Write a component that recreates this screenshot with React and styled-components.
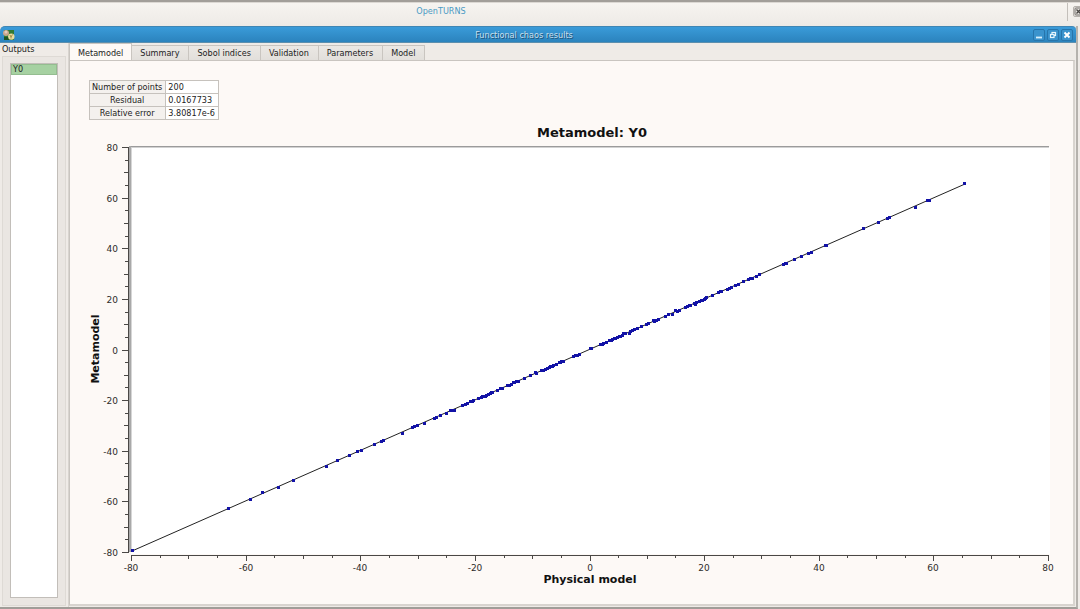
import React, { useState } from "react";
import styled, { createGlobalStyle } from "styled-components";

const GlobalStyle = createGlobalStyle`
    * {
        box-sizing: border-box;
    }

    body {
        margin: 0;
        background: #efebe7;
        color: #222;
        font-family: "DejaVu Sans Condensed", "DejaVu Sans", sans-serif;
        font-size: 9px;
        line-height: 12px;
    }

    button {
        margin: 0;
        padding: 0;
        border: none;
        color: inherit;
        font: inherit;
    }
`;

const Desktop = styled.div`
    display: flex;
    flex-direction: column;
    min-height: 100vh;
    border-top: 2px solid #a29e99;
`;

const DockBar = styled.header`
    display: flex;
    height: 24px;
    border-top: 1px solid #dcd8d3;
    background: linear-gradient(#f7f4f0, #edeae6);
`;

const DockTitle = styled.h1`
    flex: 1;
    margin: 0 0 5px;
    padding-top: 2px;
    padding-right: 185px;
    border-right: 1px solid #c3bfba;
    color: #4a9ac4;
    font-size: 9px;
    font-weight: normal;
    text-align: center;
`;

const DockClip = styled.div`
    overflow: hidden;
    width: 12px;
    padding: 3px 0 0 5px;
`;

const DockButton = styled.button`
    width: 11px;
    height: 11px;
    border: 1px solid #b5b1ac;
    border-radius: 2px;
    background: #e4e1dd;

    svg {
        display: block;
    }
`;

const Window = styled.section`
    flex: 1;
    display: flex;
    flex-direction: column;
    margin-right: 2px;
    border-right: 2px solid #b5b2ad;
    border-bottom: 2px solid #a09d98;
`;

const TitleBar = styled.div`
    display: flex;
    align-items: center;
    height: 17px;
    padding: 0 3px;
    border-top: 1px solid #3f86b4;
    border-bottom: 1px solid #5c8fae;
    border-radius: 5px 4px 0 0;
    background: linear-gradient(#3a9bd9, #2b83bd);
`;

const WindowTitle = styled.h2`
    flex: 1;
    margin: 0;
    color: #c9dfec;
    font-size: 9px;
    font-weight: normal;
    text-align: center;
    text-shadow: 1px 1px 0 #1d5479;
`;

const WindowButtons = styled.div`
    display: flex;
    gap: 2px;
`;

const WindowButton = styled.button`
    width: 12px;
    height: 12px;
    border: 1px solid #2775ab;
    border-radius: 2px;
    background: #3a93cd;

    svg {
        display: block;
    }
`;

const Body = styled.div`
    flex: 1;
    display: flex;
`;

const Sidebar = styled.aside`
    display: flex;
    flex-direction: column;
    width: 69px;
    padding: 0 2px 1px;
    border-right: 1px solid #d8d4cf;
`;

const SidebarTitle = styled.h3`
    margin: 0 0 1px;
    font-size: 9px;
    font-weight: normal;
`;

const GroupBox = styled.div`
    flex: 1;
    display: flex;
    padding: 6px 7px 7px;
    border: 1px solid #dedad5;
    background: #eae6e2;
`;

const OutputList = styled.div`
    flex: 1;
    border: 1px solid #c2beb9;
    background: #fff;
`;

const OutputItem = styled.button`
    display: block;
    width: 100%;
    height: 11px;
    padding-left: 1px;
    border: 1px solid #94bd90;
    background: #a6d1a2;
    line-height: 9px;
    text-align: left;
`;

const Main = styled.main`
    flex: 1;
    display: flex;
    flex-direction: column;
    min-width: 0;
    padding: 0 1px 1px 0;
`;

const TabList = styled.div`
    display: flex;
    align-items: flex-end;
    height: 17px;
`;

const Tab = styled.button`
    height: ${(props) => (props.$active ? 18 : 15)}px;
    margin-bottom: ${(props) => (props.$active ? -1 : 0)}px;
    padding: 0 ${(props) => (props.$first ? 8 : 9)}px 0 8px;
    border: 1px solid #c9c5c0;
    border-left-width: ${(props) => (props.$first ? 1 : 0)}px;
    border-bottom: none;
    background: ${(props) => (props.$active ? "#fdf9f6" : "linear-gradient(#ebe8e4, #e2dfdb)")};
    white-space: nowrap;
`;

const TabPanel = styled.div`
    flex: 1;
    padding: 19px 17px 14px 19px;
    border: 1px solid #c9c5c0;
    border-right: 2px solid #d8d4cf;
    border-bottom: 2px solid #d8d4cf;
    background: #fdf9f6;
`;

const ResultTable = styled.table`
    margin-bottom: 1px;
    border: 1px solid #b3afaa;
    border-collapse: collapse;
    background: #fff;
`;

const ResultName = styled.th`
    height: 13px;
    padding: 0 3px 0 2px;
    border: 1px solid #c6c2bd;
    background: #f4f1ee;
    font-weight: normal;
    text-align: center;
`;

const ResultValue = styled.td`
    height: 13px;
    padding: 0 3px 0 2px;
    border: 1px solid #c6c2bd;
`;

const Chart = styled.svg`
    display: block;
    width: 100%;
    font-family: "DejaVu Sans", sans-serif;
`;

const TickLabel = styled.text`
    fill: #2e2c2a;
    font-size: 9px;
`;

const AxisTitle = styled.text`
    fill: #111;
    font-size: 11px;
    font-weight: bold;
    text-anchor: middle;
`;

const ChartTitle = styled(AxisTitle)`
    font-size: 13px;
`;

const tabs = ["Metamodel", "Summary", "Sobol indices", "Validation", "Parameters", "Model"];

const results = [
    ["Number of points", "200"],
    ["Residual", "0.0167733"],
    ["Relative error", "3.80817e-6"],
];

const LEFT = 42;
const TOP = 27;
const PLOT_WIDTH = 917;
const PLOT_HEIGHT = 405;

// distance of each sample from the left edge of the canvas
const samples = [
    1, 97, 119, 131, 147, 162, 195, 206, 218, 226, 230, 243, 250, 252, 271, 281, 283, 286, 293,
    303, 305, 309, 315, 319, 321, 323, 331, 334, 336, 339, 341, 342, 347, 350, 351, 352, 354, 355,
    357, 359, 360, 361, 366, 369, 371, 376, 378, 380, 382, 383, 385, 387, 393, 399, 404, 405, 410,
    412, 414, 416, 418, 419, 421, 422, 425, 428, 429, 430, 432, 442, 444, 446, 448, 459, 460, 469,
    471, 472, 475, 478, 480, 481, 483, 484, 486, 488, 489, 491, 492, 494, 498, 499, 501, 503, 506,
    510, 515, 517, 522, 523, 525, 527, 534, 537, 541, 544, 546, 548, 554, 556, 558, 559, 563, 564,
    565, 568, 570, 571, 573, 574, 575, 581, 587, 589, 590, 596, 598, 600, 604, 607, 612, 617, 619,
    621, 625, 628, 652, 654, 655, 663, 670, 677, 680, 694, 695, 732, 747, 756, 758, 784, 796, 798,
    833,
];

// samples that sit visibly above or below the diagonal
const residuals = {
    1: -1, 131: -1, 147: 1, 195: 1, 271: 1, 293: 1, 315: 1, 323: 1, 339: -1, 354: 1, 382: -1,
    404: -1, 430: -1, 459: -1, 492: -1, 498: 1, 522: -1, 541: 1, 544: -1, 564: 1, 575: -1,
    589: -1, 732: -1, 784: 1, 833: -1,
};

const fitY = (x) => 430 - (x - 1) * 0.4403;

const ticks = Array.from({ length: 33 }, (_, i) => -80 + i * 5);

const tickSize = (value) => {
    if (value % 20 === 0) return 6;
    return value % 10 === 0 ? 4 : 3;
};

function MetamodelChart() {
    const xPos = (v) => Math.round(LEFT + ((v + 80) / 160) * PLOT_WIDTH);
    const yPos = (v) => Math.round(TOP + ((80 - v) / 160) * PLOT_HEIGHT);

    return (
        <Chart viewBox="0 0 967 469" role="img" aria-label="Metamodel: Y0">
            <ChartTitle x="503" y="16">Metamodel: Y0</ChartTitle>
            <rect x="42" y="26" width="919" height="407" fill="#fff" />
            <rect x="40" y="25" width="920" height="1" fill="#9b9b9b" />
            <rect x="42" y="26" width="918" height="1" fill="#d2d2d2" />
            <rect x="40" y="25" width="2" height="406" fill="#a9a9a9" />
            <rect x="42" y="27" width="1" height="404" fill="#d6d6d6" />

            <g fill="#4a4846">
                <rect x="39" y="26" width="1" height="406" />
                <rect x="42" y="434" width="918" height="1" />
                {ticks.map((v) => (
                    <rect key={v} x={39 - tickSize(v)} y={yPos(v) - 1} width={tickSize(v)} height="1" />
                ))}
                {ticks.map((v) => (
                    <rect key={v} x={xPos(v)} y="434" width="1" height={tickSize(v)} />
                ))}
            </g>
            {ticks.filter((v) => v % 20 === 0).map((v) => (
                <g key={v}>
                    <TickLabel x="29" y={yPos(v) + 3} textAnchor="end">{v}</TickLabel>
                    <TickLabel x={xPos(v)} y="450" textAnchor="middle">{v}</TickLabel>
                </g>
            ))}

            <line x1="43" y1="430" x2="876" y2="63" stroke="#222" strokeWidth="1" />
            <g fill="#1212a6">
                {samples.map((x) => (
                    <rect
                        key={x}
                        x={LEFT + x - 1}
                        y={Math.round(fitY(x) + (residuals[x] || 0) - 1.5)}
                        width="3"
                        height="3"
                    />
                ))}
            </g>

            <AxisTitle x="501" y="462">Physical model</AxisTitle>
            <AxisTitle transform="translate(10 228) rotate(-90)">Metamodel</AxisTitle>
        </Chart>
    );
}

function AppIcon() {
    return (
        <svg width="12" height="12" viewBox="0 0 12 12" aria-hidden="true">
            <rect x="1" y="1" width="10" height="10" fill="#2f7a35" />
            <circle cx="3" cy="4" r="3" fill="#c9a58c" />
            <circle cx="3" cy="3" r="1.5" fill="#e3cdbd" />
            <rect x="1" y="8" width="5" height="3" fill="#1d5524" />
            <circle cx="8.3" cy="7.6" r="3.2" fill="#eadca0" />
            <path d="M8 9.500V8l1.500-2.500M7 6l1 2" stroke="#8a7a30" strokeWidth="0.8" fill="none" />
        </svg>
    );
}

export default function App() {
    const [tab, setTab] = useState("Metamodel");

    return (
        <>
            <GlobalStyle />
            <Desktop>
                <DockBar>
                    <DockTitle>OpenTURNS</DockTitle>
                    <DockClip>
                        <DockButton aria-label="Close dock">
                            <svg width="9" height="9" viewBox="0 0 9 9">
                                <rect x="1" y="1" width="7" height="7" rx="1" fill="none" stroke="#77736f" />
                                <path d="M2.500 2.500l4 4M6.500 2.500l-4 4" stroke="#4a4744" strokeWidth="1.300" />
                            </svg>
                        </DockButton>
                    </DockClip>
                </DockBar>
                <Window>
                    <TitleBar>
                        <AppIcon />
                        <WindowTitle>Functional chaos results</WindowTitle>
                        <WindowButtons>
                            <WindowButton aria-label="Minimize">
                                <svg width="10" height="10" viewBox="0 0 10 10">
                                    <path d="M2 7.500h6" stroke="#d9f0fb" strokeWidth="1.800" />
                                </svg>
                            </WindowButton>
                            <WindowButton aria-label="Restore">
                                <svg width="10" height="10" viewBox="0 0 10 10" fill="none" stroke="#e6f5fc" strokeWidth="1.200">
                                    <rect x="4" y="2.500" width="3.500" height="3" />
                                    <rect x="2.500" y="4.500" width="3.500" height="3" fill="#3a93cd" />
                                </svg>
                            </WindowButton>
                            <WindowButton aria-label="Close">
                                <svg width="10" height="10" viewBox="0 0 10 10">
                                    <path d="M2.500 2.500l5 5M7.500 2.500l-5 5" stroke="#fff" strokeWidth="1.900" />
                                </svg>
                            </WindowButton>
                        </WindowButtons>
                    </TitleBar>
                    <Body>
                        <Sidebar>
                            <SidebarTitle>Outputs</SidebarTitle>
                            <GroupBox>
                                <OutputList>
                                    <OutputItem>Y0</OutputItem>
                                </OutputList>
                            </GroupBox>
                        </Sidebar>
                        <Main>
                            <TabList role="tablist">
                                {tabs.map((name, i) => (
                                    <Tab
                                        key={name}
                                        role="tab"
                                        aria-selected={tab === name}
                                        $active={tab === name}
                                        $first={i === 0}
                                        onClick={() => setTab(name)}
                                    >
                                        {name}
                                    </Tab>
                                ))}
                            </TabList>
                            <TabPanel role="tabpanel">
                                {tab === "Metamodel" && (
                                    <>
                                        <ResultTable>
                                            <tbody>
                                                {results.map(([name, value]) => (
                                                    <tr key={name}>
                                                        <ResultName scope="row">{name}</ResultName>
                                                        <ResultValue>{value}</ResultValue>
                                                    </tr>
                                                ))}
                                            </tbody>
                                        </ResultTable>
                                        <MetamodelChart />
                                    </>
                                )}
                            </TabPanel>
                        </Main>
                    </Body>
                </Window>
            </Desktop>
        </>
    );
}
